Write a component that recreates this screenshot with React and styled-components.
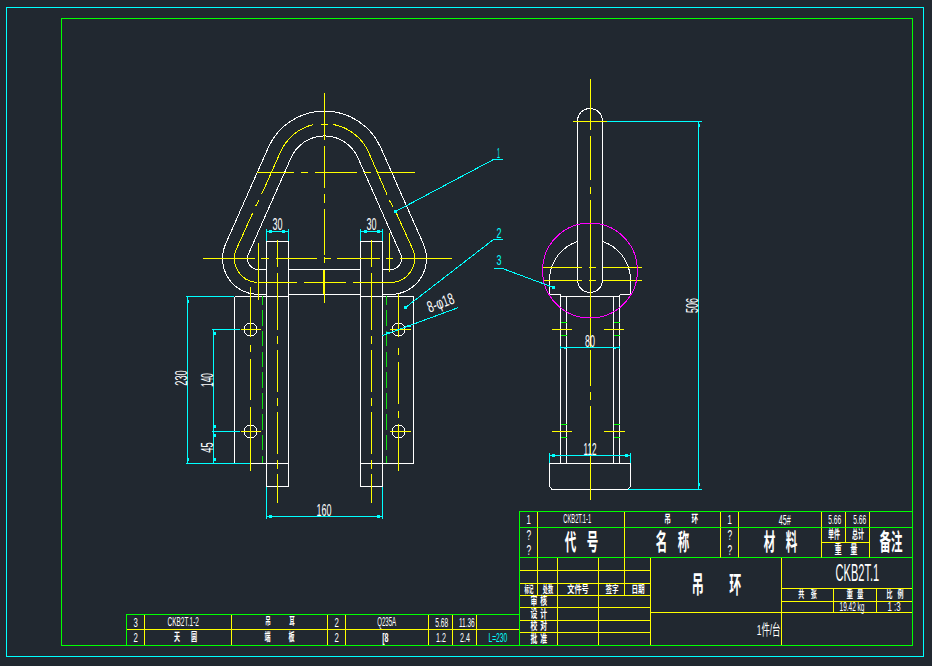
import React from 'react';
import styled, { createGlobalStyle } from 'styled-components';

const BG = '#212830';
const WHITE = '#ffffff';
const YELLOW = '#ffff00';
const GREEN = '#00ff00';
const DASH_GREEN = '#10e010';
const CYAN = '#00ffff';
const MAGENTA = '#ff00ff';

const GlobalStyle = createGlobalStyle`
  html, body {
    margin: 0;
    padding: 0;
    background: ${BG};
  }
`;

const Page = styled.div`
  position: relative;
  box-sizing: border-box;
  width: 932px;
  height: 666px;
  padding: 7px 8px 9px 6px;
  background: ${BG};
  overflow: hidden;
`;

const OuterFrame = styled.div`
  box-sizing: border-box;
  display: flex;
  width: 100%;
  height: 100%;
  padding: 10px 10px 10px 54px;
  border: 1px solid ${CYAN};
`;

const InnerFrame = styled.div`
  box-sizing: border-box;
  display: flex;
  flex: 1;
  justify-content: flex-end;
  align-items: flex-end;
  border: 1px solid ${GREEN};
`;

const Drawing = styled.svg`
  position: absolute;
  top: 0;
  left: 0;
  width: 932px;
  height: 666px;
  shape-rendering: crispEdges;
`;

const Stroke = styled.path`
  fill: none;
  stroke: ${(p) => p.$c};
  stroke-width: ${(p) => p.$w || 1}px;
  stroke-dasharray: ${(p) => p.$dash || 'none'};
  stroke-dashoffset: ${(p) => p.$offset || 0};
`;

const Hole = styled.circle`
  fill: none;
  stroke: ${(p) => p.$c || WHITE};
  stroke-width: 1px;
`;

const Slot = styled.rect`
  fill: none;
  stroke: ${WHITE};
  stroke-width: 1px;
`;

const Tick = styled.rect`
  fill: ${CYAN};
`;

const DimText = styled.text`
  fill: ${(p) => p.$c || WHITE};
  font-family: "Liberation Sans", sans-serif;
  text-anchor: middle;
`;

const PartsGrid = styled.div`
  box-sizing: border-box;
  display: grid;
  flex: none;
  grid-template-columns: 18px 87px 96px 18px 83px 24px 24px 42px;
  grid-template-rows: 15px 15px;
  border-top: 1px solid ${GREEN};
  border-left: 1px solid ${GREEN};
`;

const TitleBlock = styled.div`
  box-sizing: border-box;
  display: flex;
  flex: none;
  flex-direction: column;
  width: 393px;
  border-top: 1px solid ${GREEN};
  border-left: 1px solid ${GREEN};
`;

const TopGrid = styled.div`
  display: grid;
  grid-template-columns: 18px 87px 96px 18px 83px 24px 24px 42px;
  grid-template-rows: 16px 15px 15px;
`;

const LowerRow = styled.div`
  display: flex;
`;

const SignGrid = styled.div`
  display: grid;
  grid-template-columns: 18px 20px 41px 26px 26px;
  grid-template-rows: 13px 13px 12px 12px 13px 12px 12px;
`;

const NameColumn = styled.div`
  display: grid;
  grid-template-columns: 131px;
  grid-template-rows: 55px 32px;
`;

const CodeGrid = styled.div`
  display: grid;
  grid-template-columns: 52px 43px 35px;
  grid-template-rows: 31px 13px 11px 32px;
`;

const Cell = styled.div`
  box-sizing: border-box;
  display: flex;
  flex-direction: ${(p) => (p.$stack ? 'column' : 'row')};
  justify-content: ${(p) => (p.$end ? 'flex-end' : 'center')};
  align-items: center;
  gap: ${(p) => (p.$stack ? '1px' : '0')};
  min-width: 0;
  grid-column: ${(p) => (p.$col ? `span ${p.$col}` : 'auto')};
  grid-row: ${(p) => (p.$row ? `span ${p.$row}` : 'auto')};
  border-right: ${(p) => (p.$right ? `1px solid ${p.$right}` : 'none')};
  border-bottom: ${(p) => (p.$bottom ? `1px solid ${p.$bottom}` : 'none')};
`;

const Label = styled.span`
  display: inline-block;
  flex: none;
  color: ${(p) => p.$c || WHITE};
  font-family: "Liberation Sans", "Noto Sans CJK SC", sans-serif;
  font-size: ${(p) => p.$size || 12}px;
  font-weight: ${(p) => (p.$bold ? 700 : 400)};
  line-height: 1;
  white-space: nowrap;
  letter-spacing: ${(p) => p.$ls || 0}px;
  padding-left: ${(p) => p.$ls || 0}px;
  transform-origin: ${(p) => (p.$end ? 'right' : 'center')};
  transform: translateX(${(p) => p.$dx || 0}px) scaleX(${(p) => p.$sx || 0.5});
`;

const Big = (props) => <Label $bold $size={23} $sx={0.5} $ls={21} {...props} />;
const Seal = (props) => <Label $size={13} $sx={0.6} {...props} />;
const Unknown = () => <Label $size={14} $sx={0.6}>?</Label>;

// Offset outline of the lifting ring: top arc radius R, corner arcs radius r
const TOP = [324.5, 172.5];
const LEFT = [258.5, 258.5];
const RIGHT = [390.5, 258.5];
const NX = 0.9146;
const NY = 0.4044;

function tangent(R, r) {
  const f = (v) => v.toFixed(1);
  return {
    a: `${f(LEFT[0] - r * NX)} ${f(LEFT[1] - r * NY)}`,
    b: `${f(TOP[0] - R * NX)} ${f(TOP[1] - R * NY)}`,
    c: `${f(TOP[0] + R * NX)} ${f(TOP[1] - R * NY)}`,
    d: `${f(RIGHT[0] + r * NX)} ${f(RIGHT[1] - r * NY)}`,
  };
}

function ring(R, r, xl, xr) {
  const t = tangent(R, r);
  const y = LEFT[1] + r;
  return `M${xl} ${y} H${LEFT[0]} A${r} ${r} 0 0 1 ${t.a} L${t.b} A${R} ${R} 0 0 1 ${t.c} L${t.d} A${r} ${r} 0 0 1 ${RIGHT[0]} ${y} H${xr}`;
}

const mid = tangent(48.5, 24);

const whiteLines = [
  ring(61.5, 36, 266.5, 382.5),
  ring(36.5, 11, 266.5, 382.5),
  'M288.5 269.5 H360.5 M288.5 294.5 H360.5',
  'M266.5 241.5 H288.5 V486.5 H266.5 Z',
  'M360.5 241.5 H382.5 V486.5 H360.5 Z',
  'M234.5 296.5 H288.5 M234.5 296.5 V463.5 H288.5',
  'M360.5 296.5 H413.5 V463.5 H360.5',
  'M577.5 241.5 A41 41 0 0 0 549.5 278 V294.5 H560.5',
  'M602.5 241.5 A41 41 0 0 1 630.5 278 V294.5 H619.5',
  'M560.5 296.5 H619.5',
  'M560.5 294.5 V463.5 M566.5 296.5 V463.5 M613.5 296.5 V463.5 M619.5 294.5 V463.5',
  'M549.5 463.5 H630.5 V486.5 L628 489.5 H552 L549.5 486.5 Z',
].join(' ');

const yellowLines = [
  // dashed centre line of the ring
  `M257.5 282.5 A24 24 0 0 1 ${mid.a} L252.5 213.5 M255.5 206.5 L259 200.5 M261.5 194.5 L${mid.b} A48.5 48.5 0 0 1 313.5 124.5`,
  'M320.5 124.5 H327.5',
  `M333.5 124.5 A48.5 48.5 0 0 1 ${mid.c} L387 194.5 M389.5 200.5 L393 206.5 M396.5 213.5 L${mid.d} A24 24 0 0 1 391.5 282.5`,
  'M257.5 282.5 H296.5 M303.5 282.5 H345.5 M352.5 282.5 H391.5',
  // axes of the front view
  'M256.5 172.5 H294 M300.5 172.5 H307.5 M314.5 172.5 H356.5 M363.5 172.5 H371 M377.5 172.5 H415',
  'M202.5 258.5 H255 M260.5 258.5 H269 M275.5 258.5 H317 M323.5 258.5 H331 M336.5 258.5 H380 M385.5 258.5 H393 M399.5 258.5 H451.5',
  'M324.5 92.5 V140 M324.5 145.5 V187.5 M324.5 193.5 V202.5 M324.5 208.5 V255 M324.5 257 V263 M324.5 270 V302.5',
  'M258.5 242.5 V299.5 M389.5 232.5 V272',
  'M250.5 286.5 V336.5 M250.5 345 V351.5 M250.5 358.5 V400 M250.5 406.5 V470.5',
  'M398.5 294 V336.5 M398.5 348 V355 M398.5 361.5 V403.5 M398.5 410.5 V417.5 M398.5 423.5 V470.5',
  'M277.5 239.5 V266.5 M277.5 273 V330 M277.5 336 V344 M277.5 350 V391.5 M277.5 397.5 V406 M277.5 411.5 V453.5 M277.5 460 V468.5 M277.5 474 V502.5',
  'M371.5 239.5 V266.5 M371.5 273 V330 M371.5 336 V344 M371.5 350 V391.5 M371.5 397.5 V406 M371.5 411.5 V453.5 M371.5 460 V468.5 M371.5 474 V502.5',
  'M240.5 329.5 H260.5 M389.5 329.5 H410.5 M240.5 431.5 H260.5 M389.5 431.5 H410.5',
  // axes of the side view
  'M572.5 121.5 H606.5',
  'M590.5 78.5 V130 M590.5 136 V179.5 M590.5 186.5 V194 M590.5 199.5 V347 M590.5 350 V386 M590.5 391.5 V400 M590.5 406 V500',
  'M542.5 267.5 H581.5 M588.5 267.5 H596 M602.5 267.5 H642',
  'M543.5 280.5 H581.5 M588.5 280.5 H596 M602.5 280.5 H642',
  'M551.5 329.5 H572 M603.5 329.5 H624 M551.5 431.5 H572 M603.5 431.5 H625',
].join(' ');

const cyanLines = [
  // 230 / 140 / 45
  'M187.5 296.5 V463.5 M185.5 296.5 H234 M185.5 463.5 H250',
  'M213.5 329.5 V463.5 M211.5 329.5 H240 M211.5 431.5 H240',
  // 160
  'M266.5 486.5 V519 M382.5 486.5 V519 M266.5 516.5 H382.5',
  // 30 / 30
  'M266.5 228.5 V241 M288.5 228.5 V241 M266.5 231.5 H288.5',
  'M360.5 228.5 V241 M382.5 228.5 V241 M360.5 231.5 H382.5',
  // leaders
  'M395.5 211.5 L493.5 159.5 H502.5',
  'M405.5 307.5 L493.5 239.5 H502.5',
  'M493.5 268.5 H502.5 L553.5 287.5',
  'M382.5 335.5 L458.5 307.5',
  // 506
  'M606.5 121.5 H701.5 M698.5 121.5 V489.5 M627.5 489.5 H701.5',
  // 80 / 112
  'M560.5 347.5 H619.5 M560.5 345.5 V349 M619.5 345.5 V349',
  'M549.5 455.5 H630.5 M549.5 453 V463 M630.5 453 V463',
].join(' ');

const greenTicks = 'M560.5 322.5 H566.5 M560.5 335.5 H566.5 M560.5 424.5 H566.5 M560.5 437.5 H566.5 M613.5 322.5 H619.5 M613.5 335.5 H619.5 M613.5 424.5 H619.5 M613.5 437.5 H619.5';

const ticks = [
  [213, 332, 3, 3], [213, 425, 3, 3], [213, 434, 3, 3], [213, 458, 3, 3],
  [188, 300, 1, 3], [188, 458, 1, 3],
  [269, 515, 3, 3], [377, 515, 3, 3],
  [269, 230, 3, 3], [282, 230, 3, 3], [364, 230, 3, 3], [377, 230, 3, 3],
  [552, 454, 3, 3], [625, 454, 3, 3],
  [564, 347, 2, 2], [614, 347, 2, 2],
  [699, 124, 1, 3], [699, 483, 1, 3],
  [394, 210, 3, 3], [404, 306, 3, 3], [552, 286, 3, 3],
  [386, 332, 4, 2], [407, 325, 4, 2],
];

function Dim({ x, y, w, size = 16, rot, c, children }) {
  const base = y + size * 0.36;
  return (
    <DimText
      x={x}
      y={base}
      $c={c}
      fontSize={size}
      textLength={w}
      lengthAdjust="spacingAndGlyphs"
      transform={rot ? `rotate(${rot} ${x} ${y})` : undefined}
    >
      {children}
    </DimText>
  );
}

function CadDrawing() {
  return (
    <Drawing viewBox="0 0 932 666">
      <Stroke $c={WHITE} d={whiteLines} />
      <Slot x="577.5" y="108.5" width="25" height="184" rx="12.5" ry="12.5" />
      <Hole cx="250.5" cy="329.5" r="6.5" />
      <Hole cx="250.5" cy="431.5" r="6.5" />
      <Hole cx="398.5" cy="329.5" r="6.5" />
      <Hole cx="398.5" cy="431.5" r="6.5" />
      <Stroke $c={YELLOW} d={yellowLines} />
      <Stroke $c={YELLOW} $w={2} d="M324 270 V294" />
      <Stroke $c={DASH_GREEN} $dash="15.5 5.3" $offset={6.8} d="M262.5 296 V463 M386.5 296 V463" />
      <Stroke $c={GREEN} d={greenTicks} />
      <Hole cx="590" cy="270.5" r="47.5" $c={MAGENTA} />
      <Stroke $c={CYAN} d={cyanLines} />
      {ticks.map(([x, y, w, h]) => (
        <Tick key={`${x}-${y}`} x={x} y={y} width={w} height={h} />
      ))}

      <Dim x={277.5} y={224} w={10}>30</Dim>
      <Dim x={371.5} y={224} w={10}>30</Dim>
      <Dim x={181} y={378} w={15.5} rot={-90}>230</Dim>
      <Dim x={207.5} y={380} w={14} rot={-90}>140</Dim>
      <Dim x={207.5} y={447.5} w={10.5} rot={-90}>45</Dim>
      <Dim x={324} y={510} w={15}>160</Dim>
      <Dim x={440.5} y={302.5} w={28} rot={-20.5}>8-φ18</Dim>
      <Dim x={692.5} y={305.5} w={15} rot={-90}>506</Dim>
      <Dim x={590} y={341} w={10}>80</Dim>
      <Dim x={590} y={449.5} w={13}>112</Dim>
      <Dim x={498.5} y={152.5} w={3} size={15} c={CYAN}>1</Dim>
      <Dim x={499} y={232.5} w={5} size={15} c={CYAN}>2</Dim>
      <Dim x={499} y={259.5} w={5} size={15} c={CYAN}>3</Dim>
    </Drawing>
  );
}

function PartsList() {
  return (
    <PartsGrid>
      <Cell $right={YELLOW} $bottom={YELLOW}><Seal>3</Seal></Cell>
      <Cell $right={YELLOW} $bottom={YELLOW}><Label $size={12.5} $sx={0.52} $dx={-5}>CKB2T.1-2</Label></Cell>
      <Cell $right={YELLOW} $bottom={YELLOW}><Label $bold $size={10} $sx={0.55} $ls={34}>吊耳</Label></Cell>
      <Cell $right={YELLOW} $bottom={YELLOW}><Seal>2</Seal></Cell>
      <Cell $right={YELLOW} $bottom={YELLOW}><Label $size={12} $sx={0.51}>Q235A</Label></Cell>
      <Cell $right={YELLOW} $bottom={YELLOW}><Label $size={13} $sx={0.51} $dx={1}>5.68</Label></Cell>
      <Cell $right={YELLOW} $bottom={YELLOW}><Label $size={13} $sx={0.5} $dx={2}>11.36</Label></Cell>
      <Cell $bottom={YELLOW} />

      <Cell $right={YELLOW}><Seal>2</Seal></Cell>
      <Cell $right={YELLOW}><Label $bold $size={11} $sx={0.55} $ls={20} $dx={-2.5}>天圆</Label></Cell>
      <Cell $right={YELLOW}><Label $bold $size={11} $sx={0.55} $ls={33}>端板</Label></Cell>
      <Cell $right={YELLOW}><Seal>2</Seal></Cell>
      <Cell $right={YELLOW}><Label $bold $size={12} $sx={0.6} $dx={-2}>[8</Label></Cell>
      <Cell $right={YELLOW}><Label $size={13} $sx={0.55} $dx={1}>1.2</Label></Cell>
      <Cell $right={YELLOW}><Label $size={13} $sx={0.55} $dx={1}>2.4</Label></Cell>
      <Cell><Label $size={12} $sx={0.56} $c={CYAN}>L=230</Label></Cell>
    </PartsGrid>
  );
}

function SignTable() {
  const rows = ['审核', '设计', '校对', '批准'];
  return (
    <SignGrid>
      {[0, 1].map((i) => (
        <React.Fragment key={i}>
          <Cell $right={YELLOW} $bottom={YELLOW} />
          <Cell $right={YELLOW} $bottom={YELLOW} />
          <Cell $right={YELLOW} $bottom={YELLOW} />
          <Cell $right={YELLOW} $bottom={YELLOW} />
          <Cell $right={YELLOW} $bottom={YELLOW} />
        </React.Fragment>
      ))}
      <Cell $right={YELLOW} $bottom={YELLOW}><Label $bold $size={10} $sx={0.44}>标记</Label></Cell>
      <Cell $right={YELLOW} $bottom={YELLOW}><Label $bold $size={10} $sx={0.52}>处数</Label></Cell>
      <Cell $right={YELLOW} $bottom={YELLOW}><Label $bold $size={10} $sx={0.72}>文件号</Label></Cell>
      <Cell $right={YELLOW} $bottom={YELLOW}><Label $bold $size={10} $sx={0.66}>签字</Label></Cell>
      <Cell $right={YELLOW} $bottom={YELLOW}><Label $bold $size={10} $sx={0.66}>日期</Label></Cell>
      {rows.map((text, i) => {
        const last = i === rows.length - 1;
        const line = last ? undefined : YELLOW;
        return (
          <React.Fragment key={text}>
            <Cell $col={2} $right={YELLOW} $bottom={line}><Label $bold $size={11} $sx={0.62} $ls={4.5}>{text}</Label></Cell>
            <Cell $right={YELLOW} $bottom={line} />
            <Cell $col={2} $right={YELLOW} $bottom={line} />
          </React.Fragment>
        );
      })}
    </SignGrid>
  );
}

function TitleTable() {
  return (
    <TitleBlock>
      <TopGrid>
        <Cell $right={YELLOW} $bottom={GREEN}><Seal>1</Seal></Cell>
        <Cell $right={YELLOW} $bottom={GREEN}><Label $size={12.5} $sx={0.46} $dx={-4}>CKB2T.1-1</Label></Cell>
        <Cell $right={YELLOW} $bottom={GREEN}><Label $bold $size={11} $sx={0.6} $ls={34.5} $dx={8.5}>吊环</Label></Cell>
        <Cell $right={YELLOW} $bottom={GREEN}><Seal>1</Seal></Cell>
        <Cell $right={YELLOW} $bottom={GREEN}><Label $size={14} $sx={0.51} $dx={5}>45#</Label></Cell>
        <Cell $right={YELLOW} $bottom={GREEN}><Label $size={13} $sx={0.51} $dx={1}>5.66</Label></Cell>
        <Cell $right={YELLOW} $bottom={GREEN}><Label $size={13} $sx={0.51} $dx={2}>5.66</Label></Cell>
        <Cell $bottom={GREEN} />

        <Cell $row={2} $stack $right={YELLOW} $bottom={GREEN}><Unknown /><Unknown /></Cell>
        <Cell $row={2} $right={YELLOW} $bottom={GREEN}><Big>代号</Big></Cell>
        <Cell $row={2} $right={YELLOW} $bottom={GREEN}><Big>名称</Big></Cell>
        <Cell $row={2} $stack $right={YELLOW} $bottom={GREEN}><Unknown /><Unknown /></Cell>
        <Cell $row={2} $right={YELLOW} $bottom={GREEN}><Big>材料</Big></Cell>
        <Cell $right={YELLOW} $bottom={YELLOW}><Label $bold $size={12} $sx={0.5}>单件</Label></Cell>
        <Cell $right={YELLOW} $bottom={YELLOW}><Label $bold $size={12} $sx={0.5}>总计</Label></Cell>
        <Cell $row={2} $bottom={GREEN}><Big $ls={0}>备注</Big></Cell>
        <Cell $col={2} $right={YELLOW} $bottom={GREEN}><Label $bold $size={12} $sx={0.6} $ls={14}>重量</Label></Cell>
      </TopGrid>
      <LowerRow>
        <SignTable />
        <NameColumn>
          <Cell $right={YELLOW} $bottom={YELLOW}><Label $bold $size={24} $sx={0.5} $ls={51}>吊环</Label></Cell>
          <Cell $end $right={YELLOW}><Label $end $size={15} $sx={0.56}>1件/台</Label></Cell>
        </NameColumn>
        <CodeGrid>
          <Cell $col={3} $bottom={YELLOW}><Label $size={24} $sx={0.46} $dx={10}>CKB2T.1</Label></Cell>
          <Cell $right={YELLOW} $bottom={YELLOW}><Label $bold $size={10} $sx={0.6} $ls={11}>共张</Label></Cell>
          <Cell $right={YELLOW} $bottom={YELLOW}><Label $bold $size={10} $sx={0.65} $ls={6}>重量</Label></Cell>
          <Cell $bottom={YELLOW}><Label $bold $size={10} $sx={0.6} $ls={8}>比例</Label></Cell>
          <Cell $right={YELLOW} $bottom={YELLOW} />
          <Cell $right={YELLOW} $bottom={YELLOW}><Label $size={12} $sx={0.54} $dx={-3}>19.42 kg</Label></Cell>
          <Cell $bottom={YELLOW}><Label $size={12} $sx={0.66}>1 :3</Label></Cell>
          <Cell $col={3} />
        </CodeGrid>
      </LowerRow>
    </TitleBlock>
  );
}

export default function App() {
  return (
    <Page>
      <GlobalStyle />
      <OuterFrame>
        <InnerFrame>
          <PartsList />
          <TitleTable />
        </InnerFrame>
      </OuterFrame>
      <CadDrawing />
    </Page>
  );
}
